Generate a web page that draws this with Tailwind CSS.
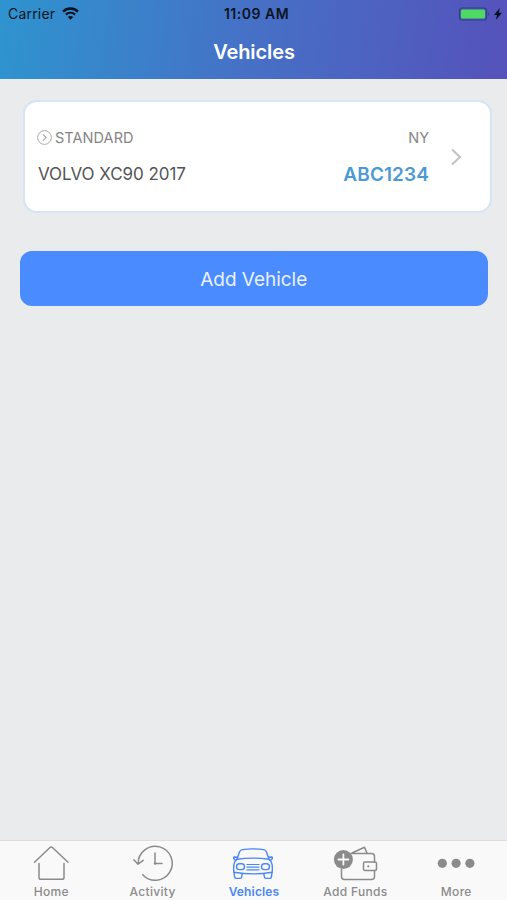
<!DOCTYPE html>
<html lang="en">

<head>
    <meta charset="UTF-8">
    <meta name="viewport" content="width=device-width, initial-scale=1.0">
    <title>Vehicles</title>
    <script src="https://cdn.jsdelivr.net/npm/@tailwindcss/browser@4"></script>
</head>

<body class="bg-[#e9ebed] font-['Inter',sans-serif]">
    <div class="flex flex-col h-[900px] w-[507px] overflow-hidden">

        <header class="h-[79px] shrink-0 bg-linear-[97deg,#2e94cf_0%,#4670c6_50%,#5552bb_100%]">
            <!-- Status bar -->
            <div class="grid grid-cols-3 items-center h-[27px] pl-2 pr-[5px] text-[#0b1422]">
                <div class="flex items-center gap-[7px] text-[14px] tracking-[0.2px]">
                    <span>Carrier</span>
                    <svg class="w-[17px] h-[13px]" viewBox="0 0 17 13" fill="none" stroke="#07101c">
                        <path stroke-width="2.4" d="M1 4.6C5.2.5 11.8.5 16 4.6" />
                        <path stroke-width="2.2" d="M3.8 7.6c2.7-2.5 6.7-2.5 9.4 0" />
                        <path fill="#07101c" stroke="none" d="M5.8 10c1.6-1.3 3.8-1.3 5.4 0l-2.7 2.8z" />
                    </svg>
                </div>
                <span class="pl-[3px] text-center text-[14px] font-semibold tracking-[0.5px]">11:09 AM</span>
                <div class="flex items-center justify-end gap-[3px]">
                    <svg class="w-[33px] h-[14px]" viewBox="0 0 33 14">
                        <rect x="1.5" y="1" width="27" height="12" rx="2.5" fill="none" stroke="#31417b" stroke-width="1.2" />
                        <rect x="3" y="2.5" width="24" height="9" rx="1.5" fill="#4cd964" />
                        <path fill="#31417b" d="M30 5q2 2 0 4z" />
                    </svg>
                    <svg class="w-2 h-3" viewBox="0 0 8 12" fill="#07101c">
                        <path d="M5.8 0 0 6.9h3.1L1.8 12 8 4.8H4.7z" />
                    </svg>
                </div>
            </div>
            <h1 class="pt-px pl-px text-center text-[20px] leading-[48px] font-semibold tracking-[-0.1px] text-white">Vehicles</h1>
        </header>

        <main class="flex-1 pl-5 pr-[15px] pt-[21px]">
            <div class="ml-[3px] flex items-center h-[113px] rounded-[14px] border-2 border-[#d6e4f5] bg-white pl-3 pr-[27px]">
                <div class="flex-1">
                    <div class="flex items-center justify-between h-6 text-[14.5px] text-[#858585]">
                        <div class="flex items-center gap-[3px]">
                            <svg class="w-[15px] h-[15px] mb-[3px]" viewBox="0 0 15 15" fill="none" stroke="#a8a8a8">
                                <circle cx="7.5" cy="7.5" r="6.9" />
                                <path d="m6 4.3 3.2 3.2L6 10.7" stroke-width="1.2" />
                            </svg>
                            <span class="pb-0.5 tracking-[0.05px]">STANDARD</span>
                        </div>
                        <span class="pb-0.5">NY</span>
                    </div>
                    <div class="flex items-center justify-between h-6 mt-3">
                        <span class="pl-px text-[17px] tracking-[-0.05px] text-[#555]">VOLVO XC90 2017</span>
                        <span class="pt-0.5 text-[19px] font-semibold tracking-[0.1px] text-[#4b9ad5]">ABC1234</span>
                    </div>
                </div>
                <svg class="ml-[22px] w-3 h-[18px]" viewBox="0 0 12 18" fill="none" stroke="#c4c4c8" stroke-width="2.2">
                    <path d="m1 1.5 8 7.5-8 7.5" />
                </svg>
            </div>
            <button class="mt-[38px] block w-[467.5px] h-[55px] rounded-xl bg-[#4a8bff] pt-[3px] text-[19px] tracking-[-0.03px] text-[#e9f1ff]">Add Vehicle</button>
        </main>

        <!-- Tab bar -->
        <nav class="grid grid-cols-5 h-[60px] border-t border-[#dcdcdd] bg-[#f9f9f9] text-[12px] leading-[20px] font-medium tracking-[0.3px] text-[#8b8b8b]">
            <a class="flex flex-col items-center pt-px">
                <svg class="w-[50px] h-10" viewBox="0 0 50 40" fill="none" stroke="currentColor" stroke-width="1.5" stroke-linecap="round" stroke-linejoin="round">
                    <path d="M8.5 20.3 24 5.5q1.2-1 2.4 0L42 20.3M13 21.5v14q0 1.8 1.8 1.8h21.4q1.8 0 1.8-1.8v-14" />
                </svg>
                <span class="pl-px">Home</span>
            </a>
            <a class="flex flex-col items-center pt-px">
                <svg class="w-[50px] h-10" viewBox="0 0 50 40" fill="none" stroke="currentColor" stroke-width="1.5" stroke-linecap="round" stroke-linejoin="round">
                    <path d="M11.2 21.5a17 17 0 1 1 4.5 11.3M6.8 17.8l4.2 4.4 5.2-3.8M28 11v10.5h7" />
                    <circle cx="28" cy="21.5" r="1.2" fill="currentColor" stroke="none" />
                </svg>
                <span class="pl-px">Activity</span>
            </a>
            <a class="flex flex-col items-center pt-px text-[#4a87f5] font-semibold tracking-[0.15px]">
                <svg class="w-[50px] h-10" viewBox="0 0 50 40" fill="none" stroke="currentColor" stroke-width="1.4" stroke-linecap="round" stroke-linejoin="round">
                    <path d="M9 17.3 11.5 10q.7-2.1 2.8-2.4 10.7-1.4 21.4 0 2.1.3 2.8 2.4L41 17.3" />
                    <path d="M9 17.3q16-2.4 32 0" />
                    <path d="M9 17.3c-3.4 2.2-4 5.8-3.1 12.9q19.1 3.4 38.2 0c.9-7.1.3-10.7-3.1-12.9" />
                    <path d="M9.6 15.3 6 15q-1.2 1.6 1.6 3.4M40.4 15.3 44 15q1.2 1.6-1.6 3.4" />
                    <path d="M5.9 30.2 6.6 35q.3 1.4 1.5 1.4h4q1.3 0 1.5-1.4l.6-3.4M44.1 30.2 43.4 35q-.3 1.4-1.5 1.4h-4q-1.3 0-1.5-1.4l-.6-3.4" />
                    <rect x="8.5" y="21.8" width="8" height="5.8" rx="2.9" />
                    <rect x="33.5" y="21.8" width="8" height="5.8" rx="2.9" />
                    <path stroke-width="1.2" d="M19 22.5h12M19 25.2h12M19 27.9h12" />
                </svg>
                <span class="pl-px">Vehicles</span>
            </a>
            <a class="flex flex-col items-center pt-px">
                <svg class="w-[50px] h-10" viewBox="0 0 50 40" fill="none" stroke="currentColor" stroke-width="1.5" stroke-linecap="round" stroke-linejoin="round">
                    <path d="M11.5 27v7.5q0 3 3 3h27q3 0 3-3V28.5M44.5 20v-5.5q0-3-3-3H21M22 11 34.5 5.3l2.5 5.8" />
                    <rect x="33.5" y="20" width="13" height="8.5" rx="1.5" />
                    <circle cx="38.3" cy="24.3" r="1.1" fill="currentColor" stroke="none" />
                    <circle cx="13.4" cy="17.5" r="9.5" fill="currentColor" stroke="none" />
                    <path stroke="#f9f9f9" stroke-width="1.8" d="M13.4 12.5v10M8.4 17.5h10" />
                </svg>
                <span class="pl-px">Add Funds</span>
            </a>
            <a class="flex flex-col items-center pt-px">
                <svg class="w-[50px] h-10" viewBox="0 0 50 40" fill="currentColor">
                    <circle cx="11.3" cy="21.3" r="4.6" />
                    <circle cx="25.1" cy="21.3" r="4.6" />
                    <circle cx="38.9" cy="21.3" r="4.6" />
                </svg>
                <span>More</span>
            </a>
        </nav>
    </div>
</body>

</html>
